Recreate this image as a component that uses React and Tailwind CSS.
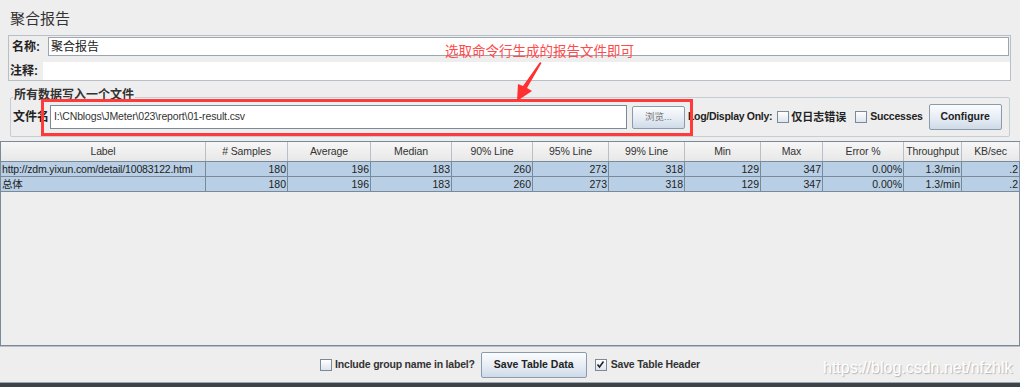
import React from "react";

const COLS = [
  { name: "Label", w: "w-[205px]" },
  { name: "# Samples", w: "w-[82px]" },
  { name: "Average", w: "w-[83px]" },
  { name: "Median", w: "w-[81px]" },
  { name: "90% Line", w: "w-[81px]" },
  { name: "95% Line", w: "w-[76px]" },
  { name: "99% Line", w: "w-[76px]" },
  { name: "Min", w: "w-[76px]" },
  { name: "Max", w: "w-[62px]" },
  { name: "Error %", w: "w-[81px]" },
  { name: "Throughput", w: "w-[58px]" },
  { name: "KB/sec", w: "w-[58px]" },
];

const ROWS = [
  ["http://zdm.yixun.com/detail/10083122.html", "180", "196", "183", "260", "273", "318", "129", "347", "0.00%", "1.3/min", ".2"],
  ["总体", "180", "196", "183", "260", "273", "318", "129", "347", "0.00%", "1.3/min", ".2"],
];

const Check = ({ checked }) => (
  <span className="w-[12px] h-[12px] border border-[#7a8a99] bg-gradient-to-b from-[#ffffff] to-[#dde5ee] flex items-center justify-center shrink-0">
    {checked && (
      <svg width="9" height="9" viewBox="0 0 9 9">
        <path d="M1.5 4.5 L3.5 7 L7.5 1.5" stroke="#222" strokeWidth="1.6" fill="none" />
      </svg>
    )}
  </span>
);

const SwingButton = ({ children, className }) => (
  <div
    className={
      "border border-[#8a9bb0] rounded-[2px] bg-gradient-to-b from-[#fbfcfd] via-[#e8eef5] to-[#cfdbe8] flex items-center justify-center whitespace-nowrap shrink-0 " +
      className
    }
  >
    {children}
  </div>
);

export default function App() {
  return (
    <div className="w-[1020px] h-[387px] bg-[#eeeeee] relative overflow-hidden flex flex-col font-['Liberation_Sans','Noto_Sans_CJK_SC',sans-serif] text-[10.5px] text-[#222]">
      {/* Title */}
      <div className="h-[35px] pl-[10px] pt-[9px] text-[15px] leading-[20px] text-[#333]">聚合报告</div>

      {/* Name / comment */}
      <div className="ml-[8px] mr-[9px] h-[46px] border border-[#b8bfc6] flex flex-col">
        <div className="h-[21px] flex items-center">
          <span className="w-[38px] pl-[3px] font-bold text-[12px]">名称:</span>
          <div className="flex-1 h-[19px] ml-[1px] mr-[1px] bg-white border border-[#9aa6b2] flex items-center pl-[2px] text-[12px] text-[#222]">聚合报告</div>
        </div>
        <div className="h-[5px]" />
        <div className="flex-1 flex items-center">
          <span className="w-[34px] pl-[1px] font-bold text-[12px]">注释:</span>
          <div className="flex-1 h-full bg-white" />
        </div>
      </div>

      {/* Write to file group */}
      <div className="ml-[10px] mr-[10px] mt-[16px] h-[40px] border border-[#c4ccd4] rounded-[2px] relative flex items-center">
        <span className="absolute -top-[10px] left-[2px] px-[1px] bg-[#eeeeee] font-bold text-[12px] text-[#333] leading-[14px]">所有数据写入一个文件</span>
        <span className="pl-[2px] w-[39px] shrink-0 font-bold text-[12px]">文件名</span>
        <div className="w-[577px] shrink-0 h-[24px] bg-white border border-[#7a8a99] flex items-center pl-[3px] text-[10.5px] tracking-[-0.15px] text-[#333]">I:\CNblogs\JMeter\023\report\01-result.csv</div>
        <SwingButton className="ml-[5px] w-[53px] h-[23px] text-[9.5px] text-[#777]">浏览...</SwingButton>
        <span className="ml-[3px] font-bold whitespace-nowrap tracking-[-0.3px]">Log/Display Only:</span>
        <span className="ml-[5px]"><Check /></span>
        <span className="ml-[2px] font-bold text-[11px] whitespace-nowrap">仅日志错误</span>
        <span className="ml-[9px]"><Check /></span>
        <span className="ml-[3px] font-bold whitespace-nowrap tracking-[-0.2px]">Successes</span>
        <SwingButton className="ml-[6px] w-[73px] h-[26px] font-bold text-[#222]">Configure</SwingButton>
      </div>

      {/* Table */}
      <div className="mt-[4px] w-[1020px] h-[205px] border border-[#7a8a99] flex flex-col">
        <div className="flex h-[20px] border-b border-[#7a8a99] bg-gradient-to-b from-[#f6f6f6] to-[#e8e8e8]">
          {COLS.map((c, i) => (
            <div key={i} className={c.w + " shrink-0 border-r border-[#b8bfc6] flex items-center justify-center text-[#333] whitespace-nowrap overflow-hidden tracking-[-0.1px]"}>
              {c.name}
            </div>
          ))}
        </div>
        {ROWS.map((r, ri) => (
          <div key={ri} className="flex h-[15px] border-b border-[#7a8a99] bg-[#b8cfe5]">
            {r.map((v, i) => (
              <div
                key={i}
                className={
                  COLS[i].w +
                  " shrink-0 border-r border-[#7a8a99] flex items-center leading-[14px] whitespace-nowrap overflow-hidden " +
                  (i === 0 ? "justify-start pl-[1px] tracking-[-0.15px]" : "justify-end pr-[1px]")
                }
              >
                {v}
              </div>
            ))}
          </div>
        ))}
      </div>

      {/* Bottom bar */}
      <div className="h-[37px] border-t border-[#b8bfc6] border-b border-b-[#9aa6b2] flex items-center justify-center">
        <Check />
        <span className="ml-[3px] font-bold text-[#333] tracking-[-0.2px]">Include group name in label?</span>
        <SwingButton className="ml-[6px] w-[106px] h-[26px] font-bold text-[#222]">Save Table Data</SwingButton>
        <span className="ml-[8px]"><Check checked /></span>
        <span className="ml-[4px] font-bold text-[#333] tracking-[-0.2px]">Save Table Header</span>
      </div>
      <div className="flex-1 bg-[#3c4448]" />

      {/* Annotations */}
      <div className="absolute left-[41px] top-[99px] w-[652px] h-[37px] border-[3px] border-[#ff3a3a]" />
      <div className="absolute left-[445px] top-[41px] text-[13.5px] leading-[18px] text-[#ff4a4a] font-['Noto_Sans_CJK_SC',sans-serif]">
        选取命令行生成的报告文件即可
      </div>
      <svg className="absolute left-[505px] top-[58px]" width="45" height="46" viewBox="0 0 45 46">
        <path d="M35 4 L36.5 5 L22 30 L27 33 L12 43 L13 26 L18 28 Z" fill="#ff3030" />
      </svg>
      <div className="absolute left-[823px] top-[358px] text-[16px] leading-[20px] text-white [text-shadow:1px_1px_1px_#b4b4b4] font-['Liberation_Sans',sans-serif]">
        https://blog.csdn.net/nfzhlk
      </div>
    </div>
  );
}
